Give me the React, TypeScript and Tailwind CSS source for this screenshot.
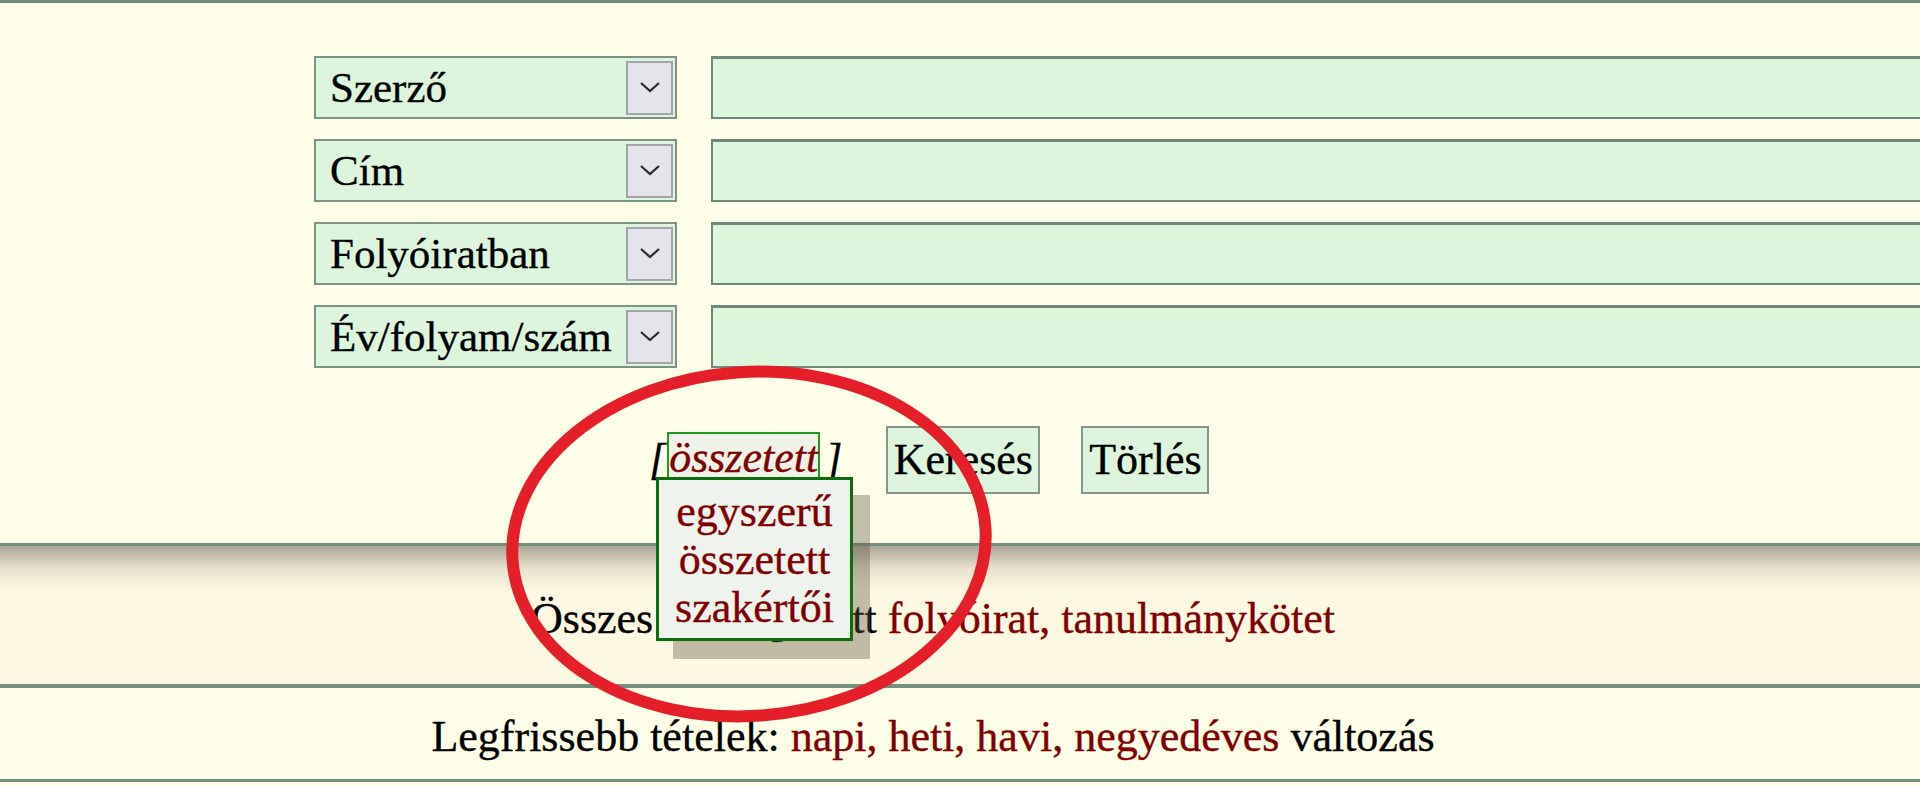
import React from 'react';

const fields = ['Szerző', 'Cím', 'Folyóiratban', 'Év/folyam/szám'];

const Chevron = () => (
  <svg width="22" height="13" viewBox="0 0 22 13" fill="none">
    <polyline points="2,2 11,10 20,2" stroke="#2b2b2b" strokeWidth="2.2" />
  </svg>
);

const FieldRow = ({ label }: { label: string }) => (
  <div className="flex h-[63px] items-stretch">
    {/* select */}
    <div className="flex w-[363px] shrink-0 items-center border-2 border-[#7a9484] bg-[#dcf5dc] pl-[14px] pr-[2px]">
      <span className="flex-1 whitespace-nowrap text-[43px] leading-none text-black">{label}</span>
      <div className="flex h-[54px] w-[47px] shrink-0 items-center justify-center border-2 border-[#a4a4ac] bg-[#e4e4ea]">
        <Chevron />
      </div>
    </div>
    {/* text input */}
    <div className="ml-[34px] w-[1300px] shrink-0 border-2 border-t-[3px] border-[#6e887a] bg-[#dcf6dc]" />
  </div>
);

export default function App() {
  return (
    <div className="relative h-[786px] w-[1920px] overflow-hidden bg-[#fffee8] font-[family-name:Liberation_Serif,serif] text-black [-webkit-text-stroke:0.35px]">
      {/* search form */}
      <div className="flex h-[543px] flex-col border-t-[3px] border-[#6f8a7c] pl-[314px] pt-[53px]">
        <div className="flex flex-col gap-[20px]">
          {fields.map((f) => (
            <FieldRow key={f} label={f} />
          ))}
        </div>

        <div className="mt-[58px] flex h-[68px] items-center pl-[335px]">
          <div className="flex items-center text-[44px] italic leading-none">
            <span className="mr-[1px]">[</span>
            <span className="border-2 border-[#1f9a1f] bg-[#eef2e8] pb-[6px] pt-[2px] text-[#800000]">összetett</span>
            <span className="ml-[5px]">]</span>
          </div>
          <button className="ml-[44px] h-[68px] w-[154px] shrink-0 border-2 border-[#86968a] bg-[#dcf5dc] font-[family-name:Liberation_Serif,serif] text-[44px] leading-none">
            Keresés
          </button>
          <button className="ml-[41px] h-[68px] w-[128px] shrink-0 border-2 border-[#86968a] bg-[#dcf5dc] font-[family-name:Liberation_Serif,serif] text-[44px] leading-none">
            Törlés
          </button>
        </div>
      </div>

      {/* collections line */}
      <div className="flex h-[141px] w-[1920px] items-center justify-center border-t-[3px] border-[#74907f] bg-[linear-gradient(to_bottom,#aea696_0px,#e6e0cc_22px,#fdf8e2_44px,#fdf8e2_100%)] pr-[54px] pt-[8px] text-[44px]">
        <span className="whitespace-pre">Összes feldolgozott </span>
        <span className="text-[#800000]">folyóirat, tanulmánykötet</span>
      </div>

      {/* latest items line */}
      <div className="flex h-[98px] w-[1920px] items-center justify-center border-b-[3px] border-t-[4px] border-[#74907f] pr-[54px] pt-[6px] text-[44px]">
        <span className="whitespace-pre">Legfrissebb tételek: </span>
        <span className="text-[#800000]">napi, heti, havi, negyedéves</span>
        <span className="whitespace-pre"> változás</span>
      </div>

      {/* open mode menu */}
      <div className="absolute left-[656px] top-[477px] flex w-[197px] flex-col items-center border-[3px] border-[#0b6e0b] bg-[#eef3ee] pb-[6px] pt-[8px] text-[44px] leading-[48px] text-[#800000] shadow-[17px_18px_0_rgba(95,88,64,0.38)]">
        <span>egyszerű</span>
        <span>összetett</span>
        <span>szakértői</span>
      </div>

      {/* annotation */}
      <svg className="pointer-events-none absolute left-[490px] top-[355px]" width="520" height="380" viewBox="0 0 520 380">
        <ellipse cx="259" cy="189" rx="237" ry="172" fill="none" stroke="#e41f28" strokeWidth="12" transform="rotate(-4 259 189)" />
      </svg>
    </div>
  );
}
